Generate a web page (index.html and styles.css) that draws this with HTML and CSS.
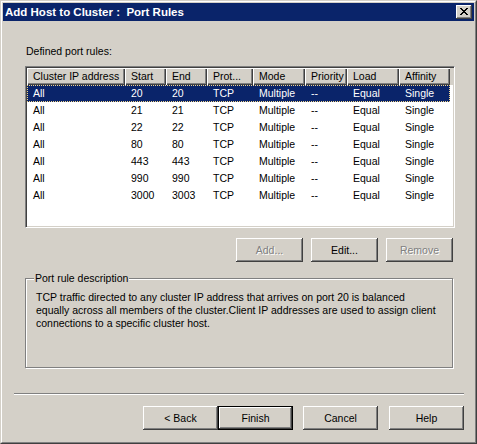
FILE: index.html
```html
<!DOCTYPE html>
<html>
<head>
<meta charset="utf-8">
<title>Add Host to Cluster : Port Rules</title>
<link rel="stylesheet" href="styles.css">
</head>
<body>
<div class="window">
  <div class="frame">
    <div class="titlebar">
      <span class="title">Add Host to Cluster :&nbsp; Port Rules</span>
      <div class="close">
        <svg width="8" height="7" viewBox="0 0 8 7" shape-rendering="crispEdges">
          <g fill="#000">
            <rect x="0" y="0" width="2" height="1"/><rect x="6" y="0" width="2" height="1"/>
            <rect x="1" y="1" width="2" height="1"/><rect x="5" y="1" width="2" height="1"/>
            <rect x="2" y="2" width="4" height="1"/>
            <rect x="3" y="3" width="2" height="1"/>
            <rect x="2" y="4" width="4" height="1"/>
            <rect x="1" y="5" width="2" height="1"/><rect x="5" y="5" width="2" height="1"/>
            <rect x="0" y="6" width="2" height="1"/><rect x="6" y="6" width="2" height="1"/>
          </g>
        </svg>
      </div>
    </div>
    <div class="client">
      <div class="label">Defined port rules:</div>
      <div class="listbox">
        <div class="lv-head">
          <div class="row">
            <div class="c c1 hc">Cluster IP address</div>
            <div class="c c2 hc">Start</div>
            <div class="c c3 hc">End</div>
            <div class="c c4 hc">Prot...</div>
            <div class="c c5 hc">Mode</div>
            <div class="c c6 hc">Priority</div>
            <div class="c c7 hc">Load</div>
            <div class="c c8 hc">Affinity</div>
          </div>
        </div>
        <div class="row sel">
          <div class="c c1">All</div><div class="c c2">20</div><div class="c c3">20</div><div class="c c4">TCP</div><div class="c c5">Multiple</div><div class="c c6">--</div><div class="c c7">Equal</div><div class="c c8">Single</div>
        </div>
        <div class="row">
          <div class="c c1">All</div><div class="c c2">21</div><div class="c c3">21</div><div class="c c4">TCP</div><div class="c c5">Multiple</div><div class="c c6">--</div><div class="c c7">Equal</div><div class="c c8">Single</div>
        </div>
        <div class="row">
          <div class="c c1">All</div><div class="c c2">22</div><div class="c c3">22</div><div class="c c4">TCP</div><div class="c c5">Multiple</div><div class="c c6">--</div><div class="c c7">Equal</div><div class="c c8">Single</div>
        </div>
        <div class="row">
          <div class="c c1">All</div><div class="c c2">80</div><div class="c c3">80</div><div class="c c4">TCP</div><div class="c c5">Multiple</div><div class="c c6">--</div><div class="c c7">Equal</div><div class="c c8">Single</div>
        </div>
        <div class="row">
          <div class="c c1">All</div><div class="c c2">443</div><div class="c c3">443</div><div class="c c4">TCP</div><div class="c c5">Multiple</div><div class="c c6">--</div><div class="c c7">Equal</div><div class="c c8">Single</div>
        </div>
        <div class="row">
          <div class="c c1">All</div><div class="c c2">990</div><div class="c c3">990</div><div class="c c4">TCP</div><div class="c c5">Multiple</div><div class="c c6">--</div><div class="c c7">Equal</div><div class="c c8">Single</div>
        </div>
        <div class="row">
          <div class="c c1">All</div><div class="c c2">3000</div><div class="c c3">3003</div><div class="c c4">TCP</div><div class="c c5">Multiple</div><div class="c c6">--</div><div class="c c7">Equal</div><div class="c c8">Single</div>
        </div>
      </div>
      <div class="btnrow">
        <div class="btn disabled">Add...</div>
        <div class="btn">Edit...</div>
        <div class="btn disabled">Remove</div>
      </div>
      <div class="group">
        <span class="legend">Port rule description</span>
        <div class="desc">TCP traffic directed to any cluster IP address that arrives on port 20 is balanced<br>equally across all members of the cluster.Client IP addresses are used to assign client<br>connections to a specific cluster host.</div>
      </div>
      <div class="sep"></div>
      <div class="footer">
        <div class="btn wide">&lt; Back</div>
        <div class="btn wide default">Finish</div>
        <div class="btn wide cancel">Cancel</div>
        <div class="btn wide help">Help</div>
      </div>
    </div>
  </div>
</div>
</body>
</html>
```

FILE: styles.css
```css
* { box-sizing: border-box; }
html, body { margin: 0; padding: 0; }
body {
  width: 477px;
  height: 444px;
  overflow: hidden;
  background: #D4D0C8;
  font-family: "Liberation Sans", Arial, sans-serif;
  font-size: 10.5px;
  color: #000;
}
.window {
  width: 477px;
  height: 444px;
  border: 1px solid;
  border-color: #D4D0C8 #404040 #404040 #D4D0C8;
}
.frame {
  height: 100%;
  border: 1px solid;
  border-color: #FFFFFF #808080 #808080 #FFFFFF;
  padding: 1px;
  display: flex;
  flex-direction: column;
}
.titlebar {
  height: 18px;
  flex: none;
  background: #0A246A;
  color: #fff;
  display: flex;
  align-items: center;
  justify-content: space-between;
  padding: 0 2px 0 2px;
}
.title {
  font-weight: bold;
  font-size: 11.5px;
  white-space: nowrap;
}
.close {
  width: 16px;
  height: 14px;
  background: #D4D0C8;
  box-shadow: inset -1px -1px #404040, inset 1px 1px #FFFFFF, inset -2px -2px #808080;
  display: flex;
  align-items: center;
  justify-content: center;
  padding-bottom: 1px;
}
.close svg { display: block; }
.client {
  flex: 1;
  display: flex;
  flex-direction: column;
}
.label {
  margin: 23px 0 0 23px;
  height: 14px;
  line-height: 14px;
}
.listbox {
  margin: 8px 0 0 22px;
  width: 430px;
  height: 162px;
  background: #fff;
  border: 1px solid;
  border-color: #808080 #FFFFFF #FFFFFF #808080;
  box-shadow: inset 1px 1px #404040, inset -1px -1px #D4D0C8;
  padding: 1px;
}
.lv-head {
  background: #D4D0C8;
  height: 17px;
}
.row {
  display: flex;
  width: 423px;
  height: 17px;
  line-height: 17px;
  white-space: nowrap;
}
.c {
  padding-left: 6px;
  overflow: hidden;
}
.hc {
  background: #D4D0C8;
  box-shadow: inset 1px 1px #FFFFFF, inset -1px -1px #404040, inset -2px -2px #808080;
  line-height: 17px;
}
.c1 { width: 98px; }
.c2 { width: 41px; }
.c3 { width: 41px; }
.c4 { width: 46px; }
.c5 { width: 52px; }
.c6 { width: 42px; }
.c7 { width: 52px; }
.c8 { width: 51px; }
.sel {
  background: #0A246A;
  color: #fff;
  outline: 1px dotted #F2D58A;
  outline-offset: -1px;
}
.btnrow {
  margin-top: 10px;
  display: flex;
  justify-content: flex-end;
  gap: 8px;
  padding-right: 21px;
}
.btn {
  width: 67px;
  height: 24px;
  background: #D4D0C8;
  box-shadow: inset -1px -1px #404040, inset 1px 1px #FFFFFF, inset -2px -2px #808080;
  display: flex;
  align-items: center;
  justify-content: center;
  white-space: nowrap;
}
.btn.disabled {
  color: #808080;
  text-shadow: 1px 1px #FFFFFF;
}
.group {
  position: relative;
  margin: 16px 0 0 22px;
  width: 428px;
  height: 90px;
  border: 1px solid #808080;
  box-shadow: inset 1px 1px #FFFFFF, 1px 1px #FFFFFF;
  padding: 12px 0 0 10px;
}
.legend {
  position: absolute;
  top: -8px;
  left: 8px;
  padding: 0 1px;
  background: #D4D0C8;
  line-height: 14px;
}
.desc {
  line-height: 13px;
  white-space: nowrap;
}
.sep {
  margin: 25px 0 0 11px;
  width: 450px;
  height: 2px;
  border-top: 1px solid #808080;
  border-bottom: 1px solid #FFFFFF;
}
.footer {
  margin-top: 11px;
  display: flex;
  padding-left: 140px;
}
.btn.wide { width: 75px; }
.btn.default {
  border: 1px solid #000;
}
.btn.cancel { margin-left: 10px; }
.btn.help { margin-left: 11px; }
```
